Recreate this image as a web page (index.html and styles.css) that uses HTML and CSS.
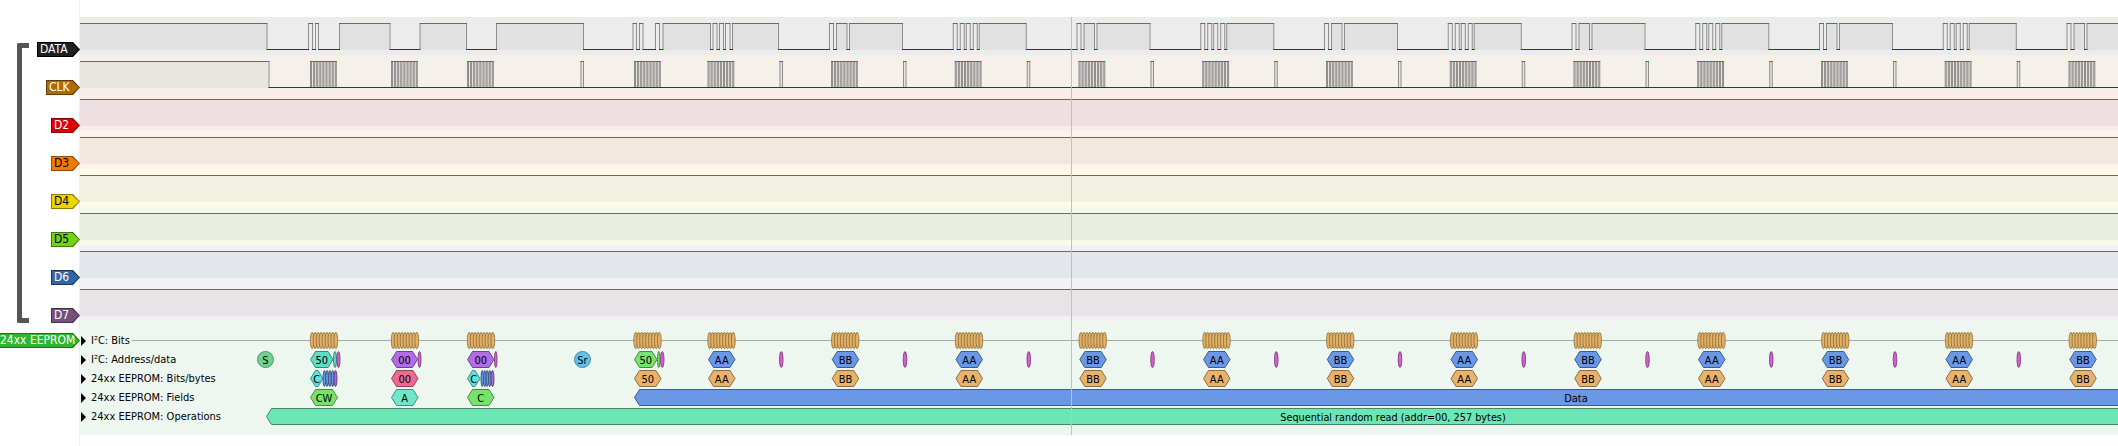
FILE: index.html
```html
<!DOCTYPE html>
<html lang="en">
<head>
<meta charset="utf-8">
<title>PulseView</title>
<link rel="stylesheet" href="styles.css">
</head>
<body>
<div class="app">
  <aside class="side">
    <div class="group">
      <div class="bracket"></div>
      <div class="tags">
        <div class="tag t-data"><span>DATA</span></div>
        <div class="tag t-clk"><span>CLK</span></div>
        <div class="tag t-d2"><span>D2</span></div>
        <div class="tag t-d3"><span>D3</span></div>
        <div class="tag t-d4"><span>D4</span></div>
        <div class="tag t-d5"><span>D5</span></div>
        <div class="tag t-d6"><span>D6</span></div>
        <div class="tag t-d7"><span>D7</span></div>
      </div>
    </div>
    <div class="decoder-tag"><span>24xx EEPROM</span></div>
  </aside>
  <main class="main">
    <div class="traces">
      <div class="trace r-data" id="tr-data"></div>
      <div class="trace r-clk" id="tr-clk"></div>
      <div class="trace r-d2" id="tr-d2"></div>
      <div class="trace r-d3" id="tr-d3"></div>
      <div class="trace r-d4" id="tr-d4"></div>
      <div class="trace r-d5" id="tr-d5"></div>
      <div class="trace r-d6" id="tr-d6"></div>
      <div class="trace r-d7" id="tr-d7"></div>
    </div>
    <div class="decoded">
      <div class="dec-row" id="dec-0"><div class="dec-name"><i class="caret"></i>I²C: Bits</div></div>
      <div class="dec-row" id="dec-1"><div class="dec-name"><i class="caret"></i>I²C: Address/data</div></div>
      <div class="dec-row" id="dec-2"><div class="dec-name"><i class="caret"></i>24xx EEPROM: Bits/bytes</div></div>
      <div class="dec-row" id="dec-3"><div class="dec-name"><i class="caret"></i>24xx EEPROM: Fields</div></div>
      <div class="dec-row" id="dec-4"><div class="dec-name"><i class="caret"></i>24xx EEPROM: Operations</div></div>
    </div>
    <div class="cursor"></div>
  </main>
</div>
<script src="app.js"></script>
</body>
</html>
```
FILE: styles.css
```css
* { box-sizing: border-box; }
html, body { margin: 0; padding: 0; background: #fff; }
body { width: 2118px; height: 446px; overflow: hidden; font-family: "DejaVu Sans Condensed", "Noto Sans", sans-serif; font-size: 11px; color: #000; }
.app { display: flex; height: 446px; }

.side { width: 80px; flex: none; padding-top: 17px; border-right: 1px solid #eeeeee; }
.group { display: flex; height: 304px; }
.bracket { flex: none; width: 12px; height: 280px; margin: 26px 0 0 17px; border: solid #555; border-width: 5px 0 5px 5px; border-radius: 2px 0 0 2px; }
.tags { margin-left: auto; padding-top: 25px; width: 50px; margin-right: -1px; display: flex; flex-direction: column; align-items: flex-end; gap: 23px; }

.tag, .decoder-tag { height: 15px; padding: 1px; flex: none; clip-path: polygon(0 0, calc(100% - 7px) 0, 100% 50%, calc(100% - 7px) 100%, 0 100%); }
.tag span, .decoder-tag span { display: block; height: 13px; line-height: 13px; font-size: 12px; clip-path: polygon(0 0, calc(100% - 7px) 0, 100% 50%, calc(100% - 7px) 100%, 0 100%); }
.tag span { padding: 0 9px 0 2px; }

.t-data { width: 43px; margin-left: -13px; background: #000; }
.t-data span { background: #1e2022; color: #fff; }
.t-clk { width: 34px; background: #5f3b02; }
.t-clk span { background: #b06a00; color: #fff; }
.t-d2 { width: 29px; background: #8a0000; }
.t-d2 span { background: #dd0000; color: #fff; }
.t-d3 { width: 29px; background: #8f4e00; }
.t-d3 span { background: #f57900; color: #000; }
.t-d4 { width: 29px; background: #8a7a00; }
.t-d4 span { background: #edd400; color: #000; }
.t-d5 { width: 29px; background: #3c7a05; }
.t-d5 span { background: #73d216; color: #000; }
.t-d6 { width: 29px; background: #16365f; }
.t-d6 span { background: #3465a4; color: #fff; }
.t-d7 { width: 29px; background: #4a3050; }
.t-d7 span { background: #75507b; color: #fff; }

.decoder-tag { width: 80px; margin: 12px -1px 0 0; padding: 1px 1px 1px 0; background: #0f7a0f; position: relative; }
.decoder-tag span { background: #2fb52f; color: #fff; padding-left: 0; white-space: nowrap; }

.main { flex: 1; min-width: 0; padding-top: 17px; position: relative; }
.trace { height: 38px; overflow: hidden; }
.trace svg, .dec-row svg { display: block; width: 2038px; }
.trace svg { height: 38px; }

.r-data { background: #ececec; }
.r-clk { background: #f5f0ea; }
.r-d2 { background: #fbecea; }
.r-d3 { background: #fdf3ea; }
.r-d4 { background: #fdfbe9; }
.r-d5 { background: #f6fbea; }
.r-d6 { background: #f0f2f6; }
.r-d7 { background: #f3f0f4; }
.r-data .fill { fill: #e1e1e1; }
.r-clk .fill { fill: #e9e5df; }
.r-d2 .fill { fill: #eee0e0; }
.r-d3 .fill { fill: #f1e8e0; }
.r-d4 .fill { fill: #f2f0e1; }
.r-d5 .fill { fill: #e9eee1; }
.r-d6 .fill { fill: #e3e6ea; }
.r-d7 .fill { fill: #e7e4e8; }
.hi { stroke: #10a810; stroke-width: 1; fill: none; }
.lo { stroke: #b00000; stroke-width: 1; fill: none; }
.edge { stroke: #8e8e8e; stroke-width: 1; fill: none; }

.decoded { height: 114px; padding-top: 11px; background: #eef7ef; }
.dec-row { height: 19px; position: relative; }
.dec-row svg { position: absolute; left: 0; top: 0; height: 19px; overflow: hidden; }
.dec-name { position: absolute; left: 1px; top: 0; z-index: 1; height: 18px; display: flex; align-items: center; white-space: nowrap; line-height: 18px; }
.caret { width: 0; height: 0; margin-right: 5px; border-style: solid; border-width: 5.5px 0 5.5px 5.5px; border-color: transparent transparent transparent #000; }

.ln { stroke: #a4aaa4; stroke-width: 1; }
.ann-text { font-family: "DejaVu Sans Condensed", "Noto Sans", sans-serif; font-size: 11px; fill: #000; text-anchor: middle; }
.ann-long { font-size: 10.8px; }
.coil { fill: #e3b066; stroke: #8d6e3a; stroke-width: 0.8; }
ellipse, polygon, circle { stroke-width: 0.9; }
.teal { fill: #5fdcc4; stroke: #2f7a6a; }
.purple { fill: #b46be6; stroke: #5f3a80; }
.green { fill: #77e36b; stroke: #3f7f3a; }
.blue { fill: #6a97e6; stroke: #35507f; }
.mag { fill: #d85fd0; stroke: #7f3a7a; }
.cyan { fill: #5de3dd; stroke: #2f7f7c; }
.pink { fill: #ee6a92; stroke: #80394f; }
.orange { fill: #e8b26a; stroke: #806039; }
.mint { fill: #6ee8c8; stroke: #3a8070; }
.op { fill: #6ce6b4; stroke: #3a7a60; }
.vio { fill: #a96ad8; stroke: #5a3a75; }
.sgrn { fill: #6fd38f; stroke: #3f8f60; }
.sblu { fill: #63c3e8; stroke: #3a7f95; }

.cursor { position: absolute; left: 991px; top: 17px; width: 1px; height: 418px; background: #c0c0c0; }
```
FILE: app.js
```js
const NS = 'http://www.w3.org/2000/svg';
const STEP = 123.75;
const END = 2125;

function svg(h, body) {
  return `<svg xmlns="${NS}" viewBox="80 0 2038 ${h}">${body}</svg>`;
}

function wave(edges, bursts) {
  const topY = 6.5, lowY = 32.5;
  let x = 80, high = true, fill = '', hi = '', lo = '', ed = '';
  const all = edges.concat([END]);
  all.forEach((e, i) => {
    if (high) {
      if (e - x > 5) fill += `<rect class="fill" x="${x}" y="7" width="${e - x}" height="26"/>`;
      hi += `M${x} ${topY}H${e + 1}`;
    } else {
      lo += `M${x} ${lowY}H${e + 1}`;
    }
    if (i < edges.length) ed += `M${e + .5} ${topY}V${lowY}`;
    x = e;
    high = !high;
  });
  bursts.forEach(b => {
    fill += `<rect class="fill" x="${b[0]}" y="7" width="${b[1]}" height="26"/>`;
    hi += `M${b[0]} ${topY}H${b[0] + b[1]}`;
    lo += `M${b[0]} ${lowY}H${b[0] + b[1]}`;
  });
  return fill + `<path class="edge" d="${ed}"/><path class="hi" d="${hi}"/><path class="lo" d="${lo}"/>`;
}

/* DATA line */
const data = [266.5, 308, 312, 315, 318, 339, 389.5, 419.5, 466, 496, 583, 632.5, 636, 639, 642.5, 655, 659, 662.5,
  710, 712.5, 716.5, 719, 723, 725, 729.5, 732, 778];
for (let k = 0; 829 + STEP * k < END; k++) {
  const s = 829 + STEP * k;
  const off = k % 2 === 0 ? [0, 4, 7, 17.5, 20, 73] : [0, 4, 7, 11, 13, 17, 20, 24, 26, 73];
  off.forEach(o => data.push(s + o));
}

/* CLK line */
const clk = [268.5], clkBursts = [];
function burst(s) {
  for (let i = 0; i < 9; i++) {
    const r = s + 3.1 * i;
    clk.push(r, r + 1);
  }
  clkBursts.push([s, 26.5]);
}
function single(s) { clk.push(s, s + 2.5); clkBursts.push([s, 3]); }
[310, 391, 467].forEach(burst);
single(580.5);
burst(634);
burst(707.5);
single(779.5);
for (let k = 0; 831 + STEP * k < END; k++) {
  burst(831 + STEP * k);
  if (903 + STEP * k < END) single(903 + STEP * k);
}

document.getElementById('tr-data').innerHTML = svg(38, wave(data.filter(e => e < END), []));
document.getElementById('tr-clk').innerHTML = svg(38, wave(clk.filter(e => e < END), clkBursts.filter(b => b[0] < END)));
['d2', 'd3', 'd4', 'd5', 'd6', 'd7'].forEach(n => {
  document.getElementById('tr-' + n).innerHTML = svg(38, wave([], []));
});

/* Annotation shapes */
function hex(cls, x0, x1, label) {
  const p = Math.min(5, (x1 - x0) / 2);
  const pts = `${x0},8.5 ${x0 + p},0.5 ${x1 - p},0.5 ${x1},8.5 ${x1 - p},16.5 ${x0 + p},16.5`;
  const t = label ? `<text class="ann-text" x="${(x0 + x1) / 2}" y="13">${label}</text>` : '';
  return `<polygon class="${cls}" points="${pts}"/>${t}`;
}
function oval(cls, x0, x1) {
  return `<ellipse class="${cls}" cx="${(x0 + x1) / 2}" cy="8.5" rx="${(x1 - x0) / 2}" ry="8"/>`;
}
function circle(cls, cx, label) {
  return `<circle class="${cls}" cx="${cx}" cy="8.5" r="8"/><text class="ann-text" x="${cx}" y="13">${label}</text>`;
}
function coil(x0) {
  let s = '';
  for (let i = 0; i < 9; i++) {
    s += `<ellipse class="coil" cx="${x0 + 1.7 + 2.95 * i}" cy="8.5" rx="1.9" ry="8.2"/>`;
  }
  return s;
}
function stack(x0, x1) {
  const n = 4, w = (x1 - x0) / n;
  let s = '';
  for (let i = 0; i < n; i++) s += oval('blue', x0 + w * i, x0 + w * (i + 1));
  return s;
}

const starts = [];
for (let k = 0; 708 + STEP * k < END; k++) starts.push(708 + STEP * k);

let r0 = '<line class="ln" x1="132" x2="2118" y1="8.5" y2="8.5"/>';
[310.5, 391.5, 467.5, 634].concat(starts).forEach(x => { r0 += coil(x); });

let r1 = circle('sgrn', 265.5, 'S')
  + hex('teal', 310.5, 333, '50') + oval('teal', 333.5, 336.5) + oval('mag', 337, 340)
  + hex('purple', 391.5, 417.5, '00') + oval('mag', 418, 421)
  + hex('purple', 467.5, 494, '00') + oval('mag', 494.5, 497)
  + circle('sblu', 582.5, 'Sr')
  + hex('green', 634.5, 657, '50') + oval('green', 657.5, 660) + oval('mag', 660.5, 664);
let r2 = hex('cyan', 310.5, 323, 'C') + stack(323, 334) + oval('vio', 334, 337)
  + hex('pink', 391.5, 418, '00')
  + hex('cyan', 467.5, 480, 'C') + stack(481, 491) + oval('vio', 491, 494)
  + hex('orange', 634.5, 661, '50');
starts.forEach((x, i) => {
  const t = i % 2 ? 'BB' : 'AA';
  r1 += hex('blue', x + .5, x + 27, t);
  r2 += hex('orange', x + .5, x + 27, t);
  if (779.5 + STEP * i < END) r1 += oval('mag', 779.5 + STEP * i, 783 + STEP * i);
});

const r3 = hex('green', 310.5, 337.5, 'CW') + hex('mint', 391.5, 418, 'A') + hex('green', 467.5, 494, 'C')
  + hex('blue', 634.5, 2518, '') + '<text class="ann-text" x="1576" y="13">Data</text>';
const r4 = hex('op', 266.5, 2519, '') + '<text class="ann-text ann-long" x="1393" y="13">Sequential random read (addr=00, 257 bytes)</text>';

[r0, r1, r2, r3, r4].forEach((body, i) => {
  document.getElementById('dec-' + i).insertAdjacentHTML('beforeend', svg(19, body));
});
```
